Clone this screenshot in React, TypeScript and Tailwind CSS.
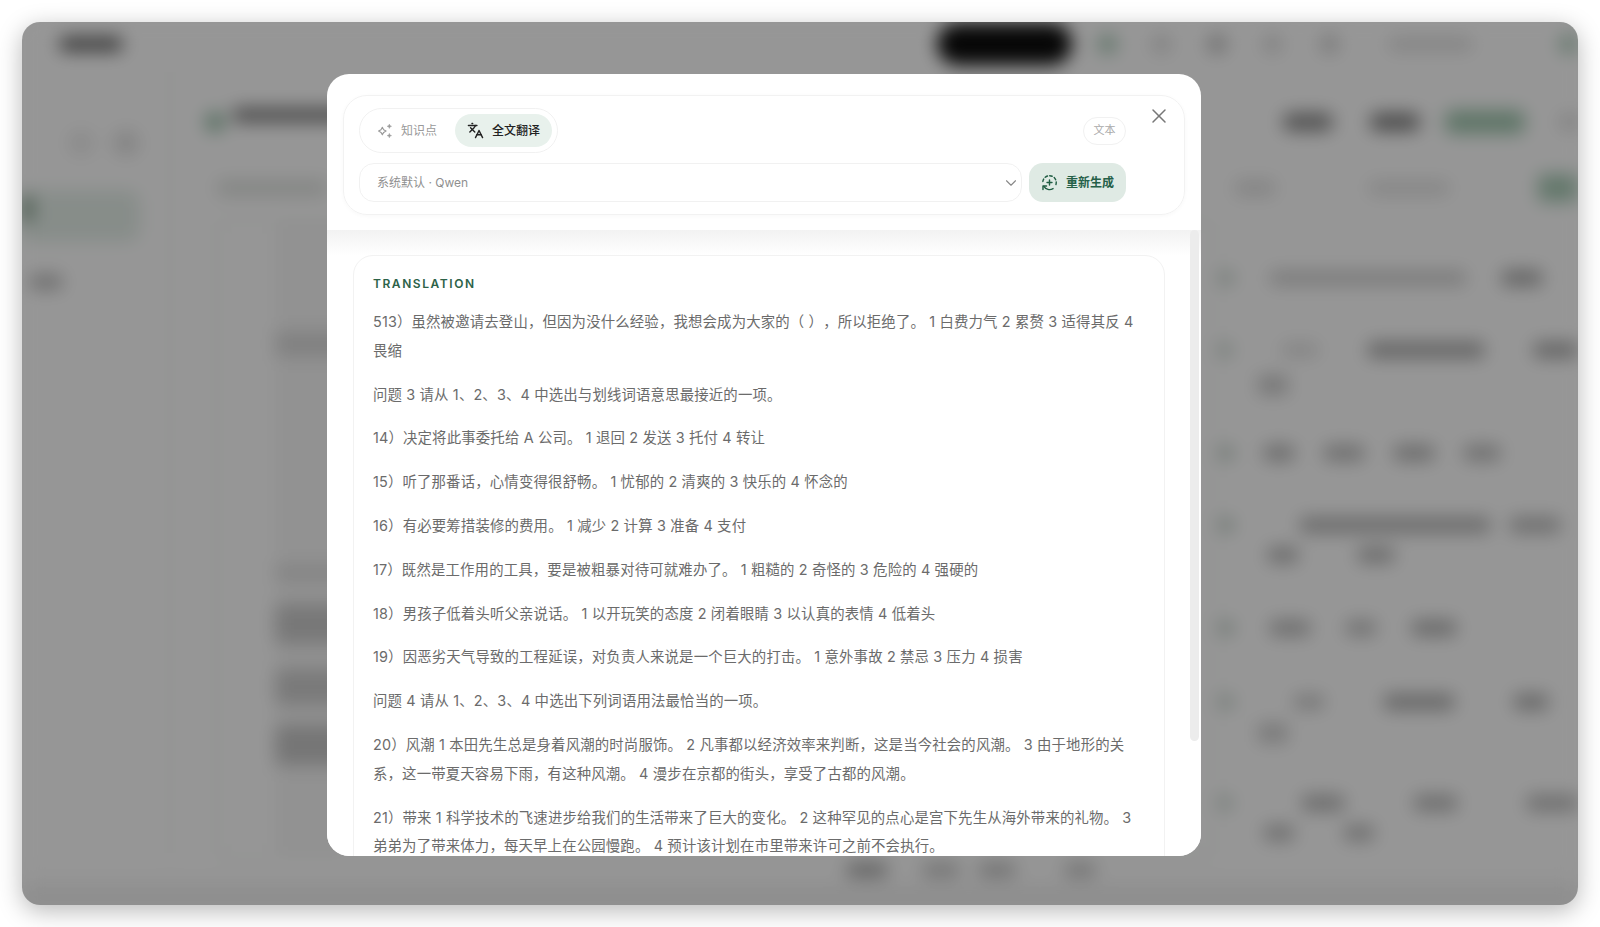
import { ChevronDown, Languages, X } from 'lucide-react';

const paragraphs = [
  '513）虽然被邀请去登山，但因为没什么经验，我想会成为大家的（ ），所以拒绝了。 1 白费力气 2 累赘 3 适得其反 4 畏缩',
  '问题 3 请从 1、2、3、4 中选出与划线词语意思最接近的一项。',
  '14）决定将此事委托给 A 公司。 1 退回 2 发送 3 托付 4 转让',
  '15）听了那番话，心情变得很舒畅。 1 忧郁的 2 清爽的 3 快乐的 4 怀念的',
  '16）有必要筹措装修的费用。 1 减少 2 计算 3 准备 4 支付',
  '17）既然是工作用的工具，要是被粗暴对待可就难办了。 1 粗糙的 2 奇怪的 3 危险的 4 强硬的',
  '18）男孩子低着头听父亲说话。 1 以开玩笑的态度 2 闭着眼睛 3 以认真的表情 4 低着头',
  '19）因恶劣天气导致的工程延误，对负责人来说是一个巨大的打击。 1 意外事故 2 禁忌 3 压力 4 损害',
  '问题 4 请从 1、2、3、4 中选出下列词语用法最恰当的一项。',
  '20）风潮 1 本田先生总是身着风潮的时尚服饰。 2 凡事都以经济效率来判断，这是当今社会的风潮。 3 由于地形的关系，这一带夏天容易下雨，有这种风潮。 4 漫步在京都的街头，享受了古都的风潮。',
  '21）带来 1 科学技术的飞速进步给我们的生活带来了巨大的变化。 2 这种罕见的点心是宫下先生从海外带来的礼物。 3 弟弟为了带来体力，每天早上在公园慢跑。 4 预计该计划在市里带来许可之前不会执行。',
];

function SparkIcon() {
  return (
    <svg viewBox="0 0 24 24" className="h-4 w-4 shrink-0 text-[#9a9a9a]" fill="none" stroke="currentColor" strokeWidth="1.7" strokeLinejoin="round">
      <path d="M8 6.5l2 3.6 3.6 2-3.6 2-2 3.6-2-3.6-3.6-2 3.6-2z" />
      <path d="M18.5 1.5l1 2.4 2.4 1-2.4 1-1 2.4-1-2.4-2.4-1 2.4-1z" fill="currentColor" strokeWidth="0.6" />
      <path d="M18.5 15.5l1 2.4 2.4 1-2.4 1-1 2.4-1-2.4-2.4-1 2.4-1z" fill="currentColor" strokeWidth="0.6" />
    </svg>
  );
}

function RegenerateIcon() {
  return (
    <svg viewBox="0 0 24 24" className="h-[17px] w-[17px] shrink-0 text-[#1f5c42]" fill="none" stroke="currentColor" strokeWidth="2" strokeLinecap="round" strokeLinejoin="round">
      <path d="M2.6 10.5A9.5 9.5 0 0 1 21.4 10.5 9.5 9.5 0 0 1 19.8 17.5" strokeDasharray="3.6 3.2" />
      <path d="M4 17.5A9.5 9.5 0 0 0 17 20.6" />
      <path d="M2.8 22v-5h5" />
      <path d="M12 8.5v7M8.5 12h7" />
    </svg>
  );
}

function BackdropApp() {
  return (
    <div className="flex h-full flex-col bg-[#fbfbfb] blur-[9px]">
      <div className="flex h-[44px] shrink-0 items-center">
        <div className="ml-[38px] h-[14px] w-[64px] rounded bg-[#606060]" />
        <div className="ml-[815px] h-[42px] w-[139px] rounded-full bg-[#0c0c0c]" />
        <div className="ml-[26px] h-[20px] w-[20px] rounded-full bg-[#a5c6b3]" />
        <div className="ml-[35px] h-[20px] w-[20px] rounded-full bg-[#d8d8d8]" />
        <div className="ml-[36px] h-[20px] w-[20px] rounded-full bg-[#bdbdbd]" />
        <div className="ml-[36px] h-[20px] w-[20px] rounded-full bg-[#d8d8d8]" />
        <div className="ml-[38px] h-[20px] w-[20px] rounded-full bg-[#cdcdcd]" />
        <div className="ml-[50px] h-[14px] w-[85px] rounded bg-[#dcdcdc]" />
        <div className="ml-[87px] h-[20px] w-[20px] rounded-full bg-[#aac9b7]" />
      </div>
      <div className="flex min-h-0 flex-1">
        <div className="w-[150px] shrink-0 border-r-[4px] border-[#f1f2f1]">
          <div className="ml-[46px] mt-[64px] flex gap-[19px]">
            <div className="h-[26px] w-[26px] rounded-full bg-[#e8e8e8]" />
            <div className="h-[26px] w-[26px] rounded-full bg-[#dddddd]" />
          </div>
          <div className="mt-[34px] flex h-[52px] w-[118px] items-start rounded-r-xl bg-[#e1ebe5]">
            <div className="mt-[6px] h-[26px] w-[10px] rounded-r bg-[#66866f]" />
          </div>
          <div className="ml-[8px] mt-[33px] h-[14px] w-[32px] rounded bg-[#b4b4b4]" />
        </div>
        <div className="min-w-0 flex-1">
          <div className="mt-[38px] flex h-[36px] items-center">
            <div className="ml-[33px] h-[20px] w-[20px] rounded-full bg-[#8fb8a0]" />
            <div className="mb-[14px] ml-[8px] h-[14px] w-[200px] rounded bg-[#7c7c7c]" />
            <div className="ml-auto h-[18px] w-[50px] rounded-lg bg-[#8a8a8a]" />
            <div className="ml-[37px] h-[18px] w-[50px] rounded-lg bg-[#808080]" />
            <div className="ml-[25px] h-[24px] w-[80px] rounded-lg bg-[#a0c5ae]" />
            <div className="ml-[35px] h-[16px] w-[18px] rounded bg-[#d8d8d8]" />
          </div>
          <div className="mt-[38px] flex h-[20px] items-center">
            <div className="ml-[45px] h-[16px] w-[110px] rounded bg-[#dcdfdc]" />
            <div className="ml-[908px] h-[16px] w-[40px] rounded bg-[#dcdcdc]" />
            <div className="ml-[94px] h-[14px] w-[80px] rounded bg-[#dedede]" />
            <div className="ml-auto h-[28px] w-[40px] rounded bg-[#a8c9b5]" />
          </div>
          <div className="flex">
            <div className="ml-[43px] mt-[20px] h-[640px] w-[1000px] shrink-0 rounded-xl border-[4px] border-[#f0f2f0] pl-[56px]">
              <div className="h-full w-[70px] bg-[#f3f3f3] pt-[110px]">
                <div className="h-[24px] w-[70px] rounded bg-[#d6d6d6]" />
                <div className="mt-[210px] h-[14px] w-[70px] rounded bg-[#d8d8d8]" />
                <div className="mt-[24px] h-[40px] w-[70px] rounded bg-[#c8c8c8]" />
                <div className="mt-[25px] h-[36px] w-[70px] rounded bg-[#cbcbcb]" />
                <div className="mt-[20px] h-[40px] w-[70px] rounded bg-[#c4c4c4]" />
              </div>
            </div>
            <div className="ml-[3px] min-w-0 flex-1 pt-[65px]">
              <div className="flex h-[30px] items-center gap-[36px]">
                <div className="h-[16px] w-[16px] rounded-full bg-[#c3cfc8]" />
                <div className="h-[14px] w-[196px] rounded bg-[#cccccc]" />
                <div className="h-[16px] w-[40px] rounded bg-[#a8a8a8]" />
              </div>
              <div className="mt-[42px] flex h-[30px] items-center gap-[50px]">
                <div className="h-[16px] w-[16px] rounded-full bg-[#c3cfc8]" />
                <div className="h-[14px] w-[40px] rounded bg-[#dcdcdc]" />
                <div className="h-[16px] w-[130px] rounded bg-[#a8a8a8]" />
                <div className="h-[16px] w-[50px] rounded bg-[#a8a8a8]" />
              </div>
              <div className="ml-[40px] mt-[5px] flex h-[30px] items-center">
                <div className="h-[20px] w-[30px] rounded bg-[#c8c8c8]" />
              </div>
              <div className="mt-[38px] flex h-[30px] items-center gap-[30px]">
                <div className="h-[16px] w-[16px] rounded-full bg-[#bcc9c1]" />
                <div className="h-[16px] w-[30px] rounded bg-[#b4b4b4]" />
                <div className="h-[16px] w-[40px] rounded bg-[#b8b8b8]" />
                <div className="h-[16px] w-[40px] rounded bg-[#b4b4b4]" />
                <div className="h-[16px] w-[36px] rounded bg-[#bababa]" />
              </div>
              <div className="mt-[42px] flex h-[30px] items-center gap-[66px]">
                <div className="h-[16px] w-[16px] rounded-full bg-[#bcc9c1]" />
                <div className="h-[16px] w-[190px] rounded bg-[#b4b4b4]" />
                <div className="-ml-[46px] h-[16px] w-[50px] rounded bg-[#b8b8b8]" />
              </div>
              <div className="ml-[50px] flex h-[30px] items-center gap-[60px]">
                <div className="h-[16px] w-[30px] rounded bg-[#b4b4b4]" />
                <div className="h-[16px] w-[36px] rounded bg-[#b4b4b4]" />
              </div>
              <div className="mt-[43px] flex h-[30px] items-center gap-[36px]">
                <div className="h-[16px] w-[16px] rounded-full bg-[#bcc9c1]" />
                <div className="h-[16px] w-[40px] rounded bg-[#b8b8b8]" />
                <div className="h-[16px] w-[30px] rounded bg-[#bfbfbf]" />
                <div className="h-[16px] w-[44px] rounded bg-[#b0b0b0]" />
              </div>
              <div className="mt-[44px] flex h-[30px] items-center gap-[60px]">
                <div className="h-[16px] w-[16px] rounded-full bg-[#c3cfc8]" />
                <div className="h-[14px] w-[30px] rounded bg-[#c4c4c4]" />
                <div className="h-[16px] w-[70px] rounded bg-[#acacac]" />
                <div className="h-[16px] w-[34px] rounded bg-[#aeaeae]" />
              </div>
              <div className="ml-[40px] mt-[1px] flex h-[30px] items-center">
                <div className="h-[20px] w-[30px] rounded bg-[#cccccc]" />
              </div>
              <div className="mt-[40px] flex h-[30px] items-center gap-[70px]">
                <div className="h-[16px] w-[16px] rounded-full bg-[#c3cfc8]" />
                <div className="h-[16px] w-[50px] rounded bg-[#b4b4b4]" />
                <div className="h-[16px] w-[50px] rounded bg-[#b6b6b6]" />
                <div className="h-[16px] w-[60px] rounded bg-[#b8b8b8]" />
              </div>
              <div className="ml-[46px] flex h-[30px] items-center gap-[50px]">
                <div className="h-[16px] w-[30px] rounded bg-[#bababa]" />
                <div className="h-[16px] w-[30px] rounded bg-[#bababa]" />
              </div>
            </div>
          </div>
        </div>
      </div>
      <div className="flex h-[48px] shrink-0 items-start bg-gradient-to-b from-[#fbfbfb] via-[#f8f8f8] to-[#e2e2e2] pt-[6px]">
        <div className="ml-[825px] h-[14px] w-[40px] rounded bg-[#a4a4a4]" />
        <div className="ml-[36px] h-[14px] w-[36px] rounded bg-[#c0c0c0]" />
        <div className="ml-[20px] h-[14px] w-[36px] rounded bg-[#bcbcbc]" />
        <div className="ml-[50px] h-[14px] w-[30px] rounded bg-[#c0c0c0]" />
      </div>
    </div>
  );
}

function TranslationModal() {
  return (
    <div className="ml-[305px] mt-[52px] flex h-[782px] w-[874px] flex-col overflow-hidden rounded-[22px] bg-white">
      <div className="h-[156px] shrink-0 px-[16px] pt-[21px]">
        <div className="relative h-[120px] rounded-[24px] border border-[#f2f2f2] pl-[15px] pr-[58px] pt-[12px] shadow-[0_1px_4px_rgba(0,0,0,0.03)]">
          <div className="flex items-center justify-between">
            <div className="flex h-[45px] items-center gap-[6px] rounded-full border border-[#f1f1f1] p-[5px]">
              <button className="flex h-[33px] items-center gap-2 rounded-full px-3 text-xs text-[#9a9a9a]">
                <SparkIcon />
                <span>知识点</span>
              </button>
              <button className="flex h-[33px] items-center gap-2 rounded-full bg-[#e8f1ec] px-3 text-xs font-medium text-[#222]">
                <Languages className="h-[17px] w-[17px] shrink-0" strokeWidth={2} />
                <span>全文翻译</span>
              </button>
            </div>
            <span className="flex h-[28px] w-[43px] items-center justify-center rounded-full border border-[#f1f1f1] text-[11px] text-[#aaa]">文本</span>
          </div>
          <div className="mt-[10px] flex gap-[7px]">
            <div className="flex h-[39px] flex-1 items-center justify-between rounded-[15px] border border-[#f1f1f1] pl-[17px] pr-[1px] text-xs text-[#8f8f8f]">
              <span>系统默认 · Qwen</span>
              <ChevronDown className="h-[18px] w-[18px] text-[#888]" strokeWidth={1.5} />
            </div>
            <button className="flex h-[39px] w-[97px] items-center justify-center gap-2 rounded-[14px] bg-[#dfeae4] text-xs font-semibold text-[#256048]">
              <RegenerateIcon />
              <span>重新生成</span>
            </button>
          </div>
          <X className="absolute right-[13px] top-[8px] h-6 w-6 text-[#777]" strokeWidth={1.5} />
        </div>
      </div>
      <div className="relative min-h-0 flex-1 overflow-hidden bg-gradient-to-b from-[#f2f2f2] via-white via-[26px] to-white pl-[26px] pt-[25px]">
        <div className="w-[812px] rounded-[20px] border border-[#f2f2f2] bg-white px-[19px] pb-[20px] pt-[20px]">
          <div className="text-xs font-semibold leading-4 tracking-[0.13em] text-[#2c6248]">TRANSLATION</div>
          <div className="mt-[16px] flex flex-col gap-[15px] text-[14.4px] leading-[28.8px] tracking-[0.16px] text-[#6b6b6b] [text-spacing-trim:space-all]">
            {paragraphs.map((text) => (
              <p key={text}>{text}</p>
            ))}
          </div>
        </div>
        <div className="absolute right-[2px] top-0 h-[511px] w-[9px] rounded-full bg-[#ececec]" />
      </div>
    </div>
  );
}

export default function App() {
  return (
    <div className="h-[927px] overflow-hidden bg-white p-[22px] font-[Inter,'Noto_Sans_CJK_SC',sans-serif]">
      <div className="relative h-[883px] overflow-hidden rounded-[18px] bg-[#fbfbfb] shadow-[0_6px_24px_rgba(0,0,0,0.28)]">
        <BackdropApp />
        <div className="absolute inset-0 bg-black/40">
          <TranslationModal />
        </div>
      </div>
    </div>
  );
}
